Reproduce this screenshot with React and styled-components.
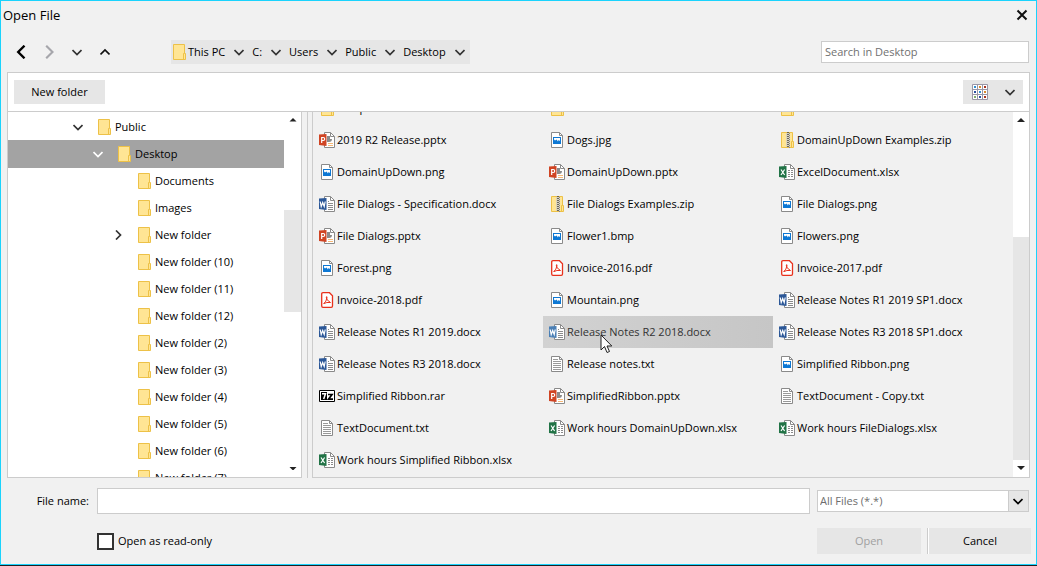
import React, { useState } from 'react'
import styled, { createGlobalStyle } from 'styled-components'

const GlobalStyle = createGlobalStyle`
* {
  box-sizing: border-box;
}
body {
  margin: 0;
  background: #1d2023;
  font-family: 'Open Sans', 'Noto Sans', sans-serif;
  font-size: 11px;
  line-height: 16px;
  color: #000;
}
button, input, select {
  font: inherit;
  color: inherit;
}
`

const Window = styled.div`
  display: flex;
  flex-direction: column;
  height: calc(100vh - 1px);
  min-height: 320px;
  background: #f1f1f1;
  border: 1px solid #1ad3fd;
`

const TitleBar = styled.header`
  display: flex;
  align-items: center;
  justify-content: space-between;
  height: 28px;
  padding: 0 8px 0 2px;
`

const Title = styled.h1`
  margin: 0;
  font-size: 13px;
  font-weight: 400;
`

const IconButton = styled.button`
  display: flex;
  align-items: center;
  justify-content: center;
  width: 28px;
  height: 24px;
  padding: 0;
  border: none;
  background: none;
  color: ${(p) => p.$color || '#333'};
`

const CloseButton = styled(IconButton)`
  width: 12px;
  color: #111;
`

const NavBar = styled.nav`
  display: flex;
  align-items: center;
  height: 43px;
  padding: 2px 7px 0 6px;
`

const Breadcrumb = styled.div`
  display: flex;
  align-items: center;
  height: 24px;
  margin-left: 52px;
  padding-right: 2px;
  background: #e6e6e6;
`

const Crumb = styled.button`
  display: flex;
  align-items: center;
  gap: 1px;
  height: 24px;
  padding: 0 6px 0 0;
  border: none;
  background: none;
  white-space: nowrap;
`

const CrumbArrow = styled(IconButton)`
  width: 16px;
  &:not(:last-child) {
    margin-right: 5px;
  }
`

const Search = styled.input`
  width: 208px;
  height: 22px;
  margin-left: auto;
  padding: 0 3px;
  border: 1px solid #ccc;
  background: #fff;
  &::placeholder {
    color: #707070;
    opacity: 1;
  }
`

const Panel = styled.main`
  display: flex;
  flex-direction: column;
  flex: 1;
  min-height: 0;
  margin: 0 6px;
`

const Toolbar = styled.div`
  display: flex;
  align-items: center;
  justify-content: space-between;
  height: 40px;
  padding: 0 6px;
  border: 1px solid #ccc;
  background: #fff;
`

const Button = styled.button`
  width: ${(p) => p.$width};
  height: ${(p) => p.$height || '24px'};
  padding: 0;
  border: none;
  background: #e6e6e6;
  &:disabled {
    color: #a0a0a0;
  }
`

const CancelButton = styled(Button)`
  box-shadow: -1px 0 #fff, -2px 0 #ccc;
`

const ViewButton = styled(Button)`
  display: flex;
  align-items: center;
  justify-content: space-between;
  padding: 0 8px 0 9px;
  color: #333;
`

const Columns = styled.div`
  display: flex;
  flex: 1;
  min-height: 0;
`

const Pane = styled.section`
  display: flex;
  flex: ${(p) => (p.$width ? 'none' : 1)};
  width: ${(p) => p.$width || 'auto'};
  min-width: 0;
  border: 1px solid #ccc;
  border-top: none;
  background: ${(p) => p.$background};
`

const Splitter = styled.div`
  width: 10px;
  border-right: 4px solid #f1f1f1;
  background: linear-gradient(to left, #ccc 1px, #f1f1f1 1px);
`

const Tree = styled.ul`
  flex: 1;
  min-width: 0;
  margin: 0;
  padding: 1px 0 0;
  overflow: hidden;
  list-style: none;
`

const TreeRow = styled.li`
  display: flex;
  align-items: center;
  height: 27px;
  padding-left: ${(p) => 60 + p.$level * 20}px;
  white-space: nowrap;
  background: ${(p) => (p.$selected ? '#a3a3a3' : 'none')};
  box-shadow: ${(p) => (p.$selected ? '0 1px #a3a3a3' : 'none')};
  color: ${(p) => (p.$selected ? '#fff' : '#333')};
`

const Toggle = styled.span`
  display: flex;
  justify-content: center;
  width: 20px;
  margin-right: 8px;
`

const Label = styled.span`
  margin-left: 3px;
  color: #000;
`

const Files = styled.ul`
  display: grid;
  grid-template-columns: repeat(auto-fill, 230px);
  grid-auto-rows: 32px;
  align-content: start;
  flex: 1;
  min-width: 0;
  margin: 0;
  padding: 0;
  overflow: hidden;
  list-style: none;
  /* the list is scrolled a little past its first row */
  & > li {
    position: relative;
    top: -20px;
  }
`

const FileRow = styled.li`
  display: flex;
  align-items: center;
  gap: 2px;
  padding-left: 6px;
  white-space: nowrap;
  background: ${(p) => (p.$hover ? 'linear-gradient(to right, #d2d2d2, #c6c6c6)' : 'none')};
  color: ${(p) => (p.$hover ? '#333' : '#000')};
`

const Track = styled.div`
  display: flex;
  flex-direction: column;
  align-items: center;
  width: ${(p) => p.$width};
  padding: 6px 0 7px;
  background: #fff;
`

const Rail = styled.div`
  flex: 1;
  display: flex;
  flex-direction: column;
  width: 100%;
  margin: 6px 0;
`

const Thumb = styled.div`
  height: ${(p) => p.$size};
  margin-top: auto;
  background: #e6e6e6;
`

const Spacer = styled.div`
  flex: 0 1 ${(p) => p.$size};
`

const Footer = styled.form`
  display: grid;
  grid-template-columns: 90px 1fr 212px;
  align-items: center;
  grid-template-rows: 46px 34px;
  padding: 0 7px 6px 6px;
`

const NameLabel = styled.label`
  justify-self: end;
  padding-right: 8px;
`

const NameInput = styled.input`
  height: 26px;
  margin-right: 7px;
  padding: 0 4px;
  border: 1px solid #ccc;
  background: #fff;
`

const TypeBox = styled.div`
  display: grid;
  grid-template-columns: 1fr 20px;
  align-items: center;
  height: 22px;
  border: 1px solid #ccc;
  background: linear-gradient(to left, #e6e6e6 19px, #ccc 19px, #ccc 20px, #fff 20px);
  svg {
    grid-area: 1 / 2;
    justify-self: center;
    pointer-events: none;
  }
`

const TypeSelect = styled.select`
  grid-area: 1 / 1 / 2 / 3;
  height: 20px;
  padding: 0 2px;
  border: none;
  background: none;
  color: #6d6d6d;
  appearance: none;
`

const CheckLabel = styled.label`
  grid-column: 2;
  display: flex;
  align-items: center;
  gap: 4px;
`

const Check = styled.input`
  width: 17px;
  height: 17px;
  margin: 0;
  border: 2px solid #333;
  background: #fff;
  appearance: none;
  &:checked {
    background: #333;
    box-shadow: inset 0 0 0 2px #fff;
  }
`

const Actions = styled.div`
  display: flex;
  gap: 8px;
  margin-right: -2px;
`

const Pointer = styled.svg`
  position: absolute;
  left: 57px;
  top: 18px;
`

const paths = {
  down: 'M.5 3L5 7.500 9.500 3',
  up: 'M.5 7.500L5 3l4.500 4.500',
  left: 'M7.500.500L3 5l4.500 4.500',
  right: 'M3 .5L7.500 5 3 9.500',
}

const Chevron = ({ to, size = 10, weight = 1.7 }) => (
  <svg width={size} height={size} viewBox="0 0 10 10" fill="none" stroke="currentColor" strokeWidth={weight}>
    <path d={paths[to]} />
  </svg>
)

const Triangle = ({ up }) => (
  <svg width="8" height="4" viewBox="0 0 8 4" fill="#222">
    <path d={up ? 'M4 0l4 4H0z' : 'M0 0h8L4 4z'} />
  </svg>
)

const FolderIcon = () => (
  <svg width="16" height="16" viewBox="0 0 16 16">
    <path d="M2.500.5h11v9h1v6h-12z" fill="#ffe594" stroke="#edc147" />
    <path d="M12.500 15V9.500h1" fill="none" stroke="#edc147" />
  </svg>
)

const OfficePage = ({ color, letter, children }) => (
  <svg width="16" height="16" viewBox="0 0 16 16">
    <path d="M5.500.5h6l4 4v11h-10z" fill="#fff" stroke="#8a8a8a" />
    <path d="M11.500.5v4h4" fill="none" stroke="#8a8a8a" />
    {children}
    <path d="M0 2.500L7.500 2v12L0 13z" fill={color} />
    <path d={letter} fill="none" stroke="#fff" strokeWidth="1.200" />
  </svg>
)

const Page = ({ children }) => (
  <svg width="16" height="16" viewBox="0 0 16 16">
    <path d="M2.500.5h8l3 3v12h-11z" fill="#fff" stroke="#8a8a8a" />
    <path d="M10.500.5v3h3" fill="none" stroke="#8a8a8a" />
    {children}
  </svg>
)

const WordIcon = ({ color = '#2b5797' }) => (
  <OfficePage color={color} letter="M1.200 5.500l1 5 1.500-4 1.500 4 1-5">
    <path d="M9 5.500h1M9 7.500h5M9 9.500h5M9 11.500h5M9 13.500h5" stroke="#8a8a8a" />
  </OfficePage>
)

const PowerPointIcon = () => (
  <OfficePage color="#d04423" letter="M2.700 11V5.500h1.500q1.500 0 1.500 1.500t-1.500 1.500H2.700">
    <path d="M8 4h3v3h2q0 3-3 3H8z" fill="#8a8a8a" />
    <path d="M9 11.500h5M9 13.500h5" stroke="#f5b877" />
  </OfficePage>
)

const ExcelIcon = () => (
  <OfficePage color="#217346" letter="M2 5.500l3.600 5.500M5.600 5.500L2 11">
    <path d="M9 6.500h2M12 6.500h2M9 8.500h2M12 8.500h2M9 10.500h2M12 10.500h2M9 12.500h2M12 12.500h2" stroke="#8a8a8a" />
  </OfficePage>
)

const ImageIcon = () => (
  <Page>
    <path d="M4 5h8v7H4z" fill="#0e78d4" />
    <path d="M5 6h6v3L9.500 8 9 9.500 7.500 7.500 6 8.500 5 7.500z" fill="#fff" />
  </Page>
)

const TextIcon = () => (
  <Page>
    <path d="M4 3.500h5M4 5.500h8M4 7.500h8M4 9.500h8M4 11.500h8M4 13.500h8" stroke="#999" />
  </Page>
)

const PdfIcon = () => (
  <svg width="16" height="16" viewBox="0 0 16 16" fill="none" stroke="#e8311c">
    <path d="M4 .700h6.500l3 3V14q0 1.300-1.300 1.300H4Q2.700 15.300 2.700 14V2Q2.700.700 4 .700z" fill="#fff" strokeWidth="1.300" />
    <path d="M4.500 12q3-2.500 3.500-6.500 0-1.500-.800-.500Q7 8 11.500 10.500M5 11.500q2.500-1.500 6.500-1" />
  </svg>
)

const ZipIcon = () => (
  <svg width="16" height="16" viewBox="0 0 16 16">
    <path d="M2.500.5h11v9h1v6h-12z" fill="#ffe594" stroke="#edc147" />
    <path d="M7 1h4v14H7z" fill="#d9d2bb" />
    <path d="M9 0v16" stroke="#444" strokeWidth="1.500" strokeDasharray="1 1" />
    <path d="M10.500 0v16" stroke="#888" strokeDasharray="1 1" strokeDashoffset="1" />
    <path d="M12.500 15V9.500h1" fill="none" stroke="#edc147" />
  </svg>
)

const RarIcon = () => (
  <svg width="16" height="16" viewBox="0 0 16 16">
    <path d="M.5 2.500h15v11H.5z" fill="#fff" stroke="#000" />
    <path d="M2 4h6v8H2z" fill="#000" />
    <path d="M3 5.700h3.500L4.700 11" fill="none" stroke="#fff" strokeWidth="1.500" />
    <path d="M9 6.500h4L9.500 11.200H14" fill="none" stroke="#000" strokeWidth="1.700" />
  </svg>
)

const tileColors = ['#2f8fd0', '#d88a2c', '#a8321f', '#2a4fa0', '#2f8fd0', '#d88a2c', '#7fae6a', '#2a4fa0', '#a8321f']

const TilesIcon = () => (
  <svg width="16" height="16" viewBox="0 0 16 16">
    <path d="M.5.500h15v15H.5zM5.500.500v15M10.500.500v15M.5 5.500h15M.5 10.500h15" fill="#fff" stroke="#9a97a6" />
    {tileColors.map((color, i) => (
      <rect key={i} x={2 + (i % 3) * 5} y={2 + Math.floor(i / 3) * 5} width="2" height="2" fill={color} />
    ))}
  </svg>
)

const icons = {
  docx: WordIcon,
  pptx: PowerPointIcon,
  xlsx: ExcelIcon,
  png: ImageIcon,
  jpg: ImageIcon,
  bmp: ImageIcon,
  txt: TextIcon,
  pdf: PdfIcon,
  zip: ZipIcon,
  rar: RarIcon,
}

const crumbs = ['This PC', 'C:', 'Users', 'Public', 'Desktop']

const tree = [
  { name: 'Public', level: 0, toggle: 'down' },
  { name: 'Desktop', level: 1, toggle: 'down', selected: true },
  { name: 'Documents', level: 2 },
  { name: 'Images', level: 2 },
  { name: 'New folder', level: 2, toggle: 'right' },
  ...[10, 11, 12, 2, 3, 4, 5, 6, 7].map((n) => ({ name: `New folder (${n})`, level: 2 })),
]

const files = [
  'Temp',
  'Tests',
  'Users',
  '2019 R2 Release.pptx',
  'Dogs.jpg',
  'DomainUpDown Examples.zip',
  'DomainUpDown.png',
  'DomainUpDown.pptx',
  'ExcelDocument.xlsx',
  'File Dialogs - Specification.docx',
  'File Dialogs Examples.zip',
  'File Dialogs.png',
  'File Dialogs.pptx',
  'Flower1.bmp',
  'Flowers.png',
  'Forest.png',
  'Invoice-2016.pdf',
  'Invoice-2017.pdf',
  'Invoice-2018.pdf',
  'Mountain.png',
  'Release Notes R1 2019 SP1.docx',
  'Release Notes R1 2019.docx',
  'Release Notes R2 2018.docx',
  'Release Notes R3 2018 SP1.docx',
  'Release Notes R3 2018.docx',
  'Release notes.txt',
  'Simplified Ribbon.png',
  'Simplified Ribbon.rar',
  'SimplifiedRibbon.pptx',
  'TextDocument - Copy.txt',
  'TextDocument.txt',
  'Work hours DomainUpDown.xlsx',
  'Work hours FileDialogs.xlsx',
  'Work hours Simplified Ribbon.xlsx',
]

const hovered = 'Release Notes R2 2018.docx'

const ScrollBar = ({ width, before, thumb, after }) => (
  <Track $width={width}>
    <Triangle up />
    <Rail>
      <Spacer $size={before} />
      <Thumb $size={thumb} />
      <Spacer $size={after} />
    </Rail>
    <Triangle />
  </Track>
)

const File = ({ name }) => {
  const Icon = icons[name.split('.').pop()] || FolderIcon
  const hover = name === hovered
  return (
    <FileRow $hover={hover}>
      {hover ? <WordIcon color="#4a7fb5" /> : <Icon />}
      <span>{name}</span>
      {hover && (
        <Pointer width="13" height="20" viewBox="0 0 13 20">
          <path d="M1 1v15l3.500-3.500L7 18.500l2.500-1L7 12h4.800z" fill="#fff" stroke="#222" />
        </Pointer>
      )}
    </FileRow>
  )
}

export default function App() {
  const [fileName, setFileName] = useState('')
  const [readOnly, setReadOnly] = useState(false)

  return (
    <Window>
      <GlobalStyle />

      <TitleBar>
        <Title>Open File</Title>
        <CloseButton aria-label="Close">
          <svg width="12" height="12" viewBox="0 0 12 12" stroke="currentColor" strokeWidth="2">
            <path d="M1.500 1.500l9 9M10.500 1.500l-9 9" />
          </svg>
        </CloseButton>
      </TitleBar>

      <NavBar>
        <IconButton aria-label="Back" $color="#000"><Chevron to="left" size={14} /></IconButton>
        <IconButton aria-label="Forward" $color="#a6a6ab"><Chevron to="right" size={14} weight={1.5} /></IconButton>
        <IconButton aria-label="Recent"><Chevron to="down" /></IconButton>
        <IconButton aria-label="Up" $color="#111"><Chevron to="up" /></IconButton>
        <Breadcrumb>
          {crumbs.map((name, i) => (
            <React.Fragment key={name}>
              <Crumb>
                {i === 0 && <FolderIcon />}
                {name}
              </Crumb>
              <CrumbArrow aria-label={`Folders in ${name}`}><Chevron to="down" /></CrumbArrow>
            </React.Fragment>
          ))}
        </Breadcrumb>
        <Search type="text" aria-label="Search" placeholder="Search in Desktop" />
      </NavBar>

      <Panel>
        <Toolbar>
          <Button $width="91px">New folder</Button>
          <ViewButton $width="60px" aria-label="View">
            <TilesIcon />
            <Chevron to="down" />
          </ViewButton>
        </Toolbar>

        <Columns>
          <Pane $width="295px" $background="#fff">
            <Tree>
              {tree.map((node) => (
                <TreeRow key={node.name} $level={node.level} $selected={node.selected}>
                  <Toggle>{node.toggle && <Chevron to={node.toggle} />}</Toggle>
                  <FolderIcon />
                  <Label>{node.name}</Label>
                </TreeRow>
              ))}
            </Tree>
            <ScrollBar width="17px" before="82px" thumb="102px" after="149px" />
          </Pane>
          <Splitter />
          <Pane $background="#f1f1f1">
            <Files>
              {files.map((name) => (
                <File key={name} name={name} />
              ))}
            </Files>
            <ScrollBar width="16px" before="109px" thumb="223px" after="0px" />
          </Pane>
        </Columns>
      </Panel>

      <Footer onSubmit={(e) => e.preventDefault()}>
        <NameLabel htmlFor="name">File name:</NameLabel>
        <NameInput id="name" type="text" value={fileName} onChange={(e) => setFileName(e.target.value)} />
        <TypeBox>
          <TypeSelect aria-label="File type">
            <option>All Files (*.*)</option>
          </TypeSelect>
          <Chevron to="down" />
        </TypeBox>
        <CheckLabel>
          <Check type="checkbox" checked={readOnly} onChange={(e) => setReadOnly(e.target.checked)} />
          Open as read-only
        </CheckLabel>
        <Actions>
          <Button $width="104px" $height="26px" type="submit" disabled={!fileName}>Open</Button>
          <CancelButton $width="102px" $height="26px" type="button">Cancel</CancelButton>
        </Actions>
      </Footer>
    </Window>
  )
}
